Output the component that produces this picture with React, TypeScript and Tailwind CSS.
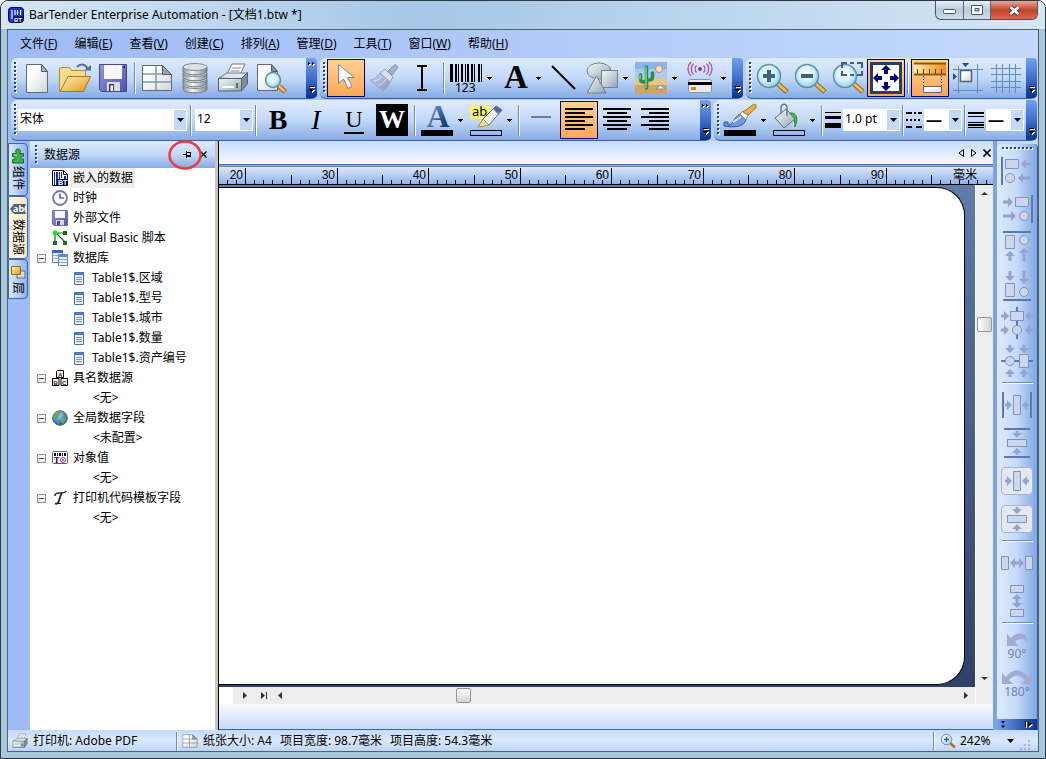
import type { ReactNode } from "react";

type Children = { children?: ReactNode };

const Icon = ({ children, w = 32, h = 32 }: Children & { w?: number; h?: number }) => (
  <svg width={w} height={h} viewBox={`0 0 ${w} ${h}`} fill="none" aria-hidden="true" className="shrink-0 overflow-visible">
    {children}
  </svg>
);

const Gradients = () => (
  <svg width="0" height="0" className="h-0 w-0" aria-hidden="true">
    <defs>
      <linearGradient id="paper" x1="0" y1="0" x2="1" y2="1">
        <stop offset="0.3" stopColor="#ffffff" />
        <stop offset="1" stopColor="#cdd3dc" />
      </linearGradient>
      <linearGradient id="gold" x1="0" y1="0" x2="1" y2="1">
        <stop offset="0" stopColor="#fff0b8" />
        <stop offset="1" stopColor="#dd9a1c" />
      </linearGradient>
      <linearGradient id="steel" x1="0" y1="0" x2="1" y2="0">
        <stop offset="0" stopColor="#8d979c" />
        <stop offset="0.4" stopColor="#f4f7f8" />
        <stop offset="1" stopColor="#7b868c" />
      </linearGradient>
      <linearGradient id="violet" x1="0" y1="0" x2="1" y2="1">
        <stop offset="0" stopColor="#9498dc" />
        <stop offset="1" stopColor="#5252a4" />
      </linearGradient>
      <linearGradient id="shape" x1="0" y1="0" x2="1" y2="1">
        <stop offset="0" stopColor="#f6fbfc" />
        <stop offset="1" stopColor="#93a6b3" />
      </linearGradient>
      <linearGradient id="navy" x1="0" y1="0" x2="1" y2="1">
        <stop offset="0.1" stopColor="#8fb2e2" />
        <stop offset="0.7" stopColor="#1f3f7a" />
      </linearGradient>
      <linearGradient id="muted" x1="0" y1="0" x2="1" y2="1">
        <stop offset="0" stopColor="#cbd3e8" />
        <stop offset="1" stopColor="#8795bd" />
      </linearGradient>
      <linearGradient id="amber" x1="0" y1="0" x2="1" y2="0">
        <stop offset="0" stopColor="#fff0b0" />
        <stop offset="1" stopColor="#f08a1c" />
      </linearGradient>
      <radialGradient id="lens" cx="0.45" cy="0.4" r="0.6">
        <stop offset="0" stopColor="#ffffff" />
        <stop offset="0.55" stopColor="#d4f1fb" />
        <stop offset="1" stopColor="#8fcbea" />
      </radialGradient>
      <radialGradient id="globe" cx="0.4" cy="0.3" r="0.7">
        <stop offset="0" stopColor="#a8d8ff" />
        <stop offset="1" stopColor="#1b4f9c" />
      </radialGradient>
    </defs>
  </svg>
);

const Caret = () => (
  <svg width="5" height="3" viewBox="0 0 5 3" aria-hidden="true" shapeRendering="crispEdges">
    <path d="M0 0h5v1h-1v1h-1v1h-1v-1h-1v-1h-1z" fill="#000" />
  </svg>
);

const Grip = () => (
  <svg width="7" height="32" viewBox="0 0 7 32" aria-hidden="true" className="shrink-0" shapeRendering="crispEdges">
    {[0, 1, 2, 3, 4, 5, 6, 7].map((i) => (
      <g key={i}>
        <rect x="4" y={i * 4 + 1} width="2" height="2" fill="#fff" />
        <rect x="3" y={i * 4} width="2" height="2" fill="#27418a" />
      </g>
    ))}
  </svg>
);

const Separator = ({ className = "h-[31px]" }: { className?: string }) => (
  <div className={`flex w-[6px] shrink-0 justify-center ${className}`} role="separator">
    <div className="w-px bg-[#6a8ccb]" />
    <div className="w-px bg-white" />
  </div>
);

const Overflow = ({ arrows = false }: { arrows?: boolean }) => (
  <button
    aria-label="工具栏选项"
    className="ml-auto flex h-full w-[11px] shrink-0 flex-col items-center justify-between rounded-r-sm bg-linear-to-b from-[#74a0ef] via-[#3f6fc9] to-[#07338f] py-1"
  >
    <svg width="8" height="5" viewBox="0 0 8 5" aria-hidden="true" shapeRendering="crispEdges">
      {arrows && (
        <>
          <path d="M1 1h1v1h1v1h-1v1h-1zM5 1h1v1h1v1h-1v1h-1z" fill="#fff" />
          <path d="M0 0h1v1h1v1h-1v1h-1zM4 0h1v1h1v1h-1v1h-1z" fill="#000" />
        </>
      )}
    </svg>
    <svg width="8" height="8" viewBox="0 0 8 8" aria-hidden="true" shapeRendering="crispEdges">
      <path d="M2 1h5v1H2zM2 4h5v1h-1v1h-1v1h-1v-1h-1v-1h-1z" fill="#fff" />
      <path d="M1 0h5v1H1zM1 3h5v1h-1v1h-1v1h-1v-1h-1v-1h-1z" fill="#000" />
    </svg>
  </button>
);

const Toolbar = ({ children, label, className, arrows }: Children & { label: string; className: string; arrows?: boolean }) => (
  <div
    role="toolbar"
    aria-label={label}
    className={`flex h-[41px] items-center rounded-md border-b border-[#3b619c] bg-linear-to-b from-[#dfebfd] via-[#c3d9f8] to-[#86abe4] ${className}`}
  >
    <Grip />
    {children}
    <Overflow arrows={arrows} />
  </div>
);

const ToolButton = ({ children, label, active, menu }: Children & { label: string; active?: boolean; menu?: boolean }) => (
  <button
    aria-label={label}
    aria-pressed={active}
    className={`flex h-[38px] shrink-0 items-center border ${menu ? "w-[49px] gap-[5px] pl-[2px]" : "w-[38px] justify-center"} ${
      active ? "border-[#000080] bg-linear-to-b from-[#ffd192] to-[#fda754]" : "border-transparent"
    }`}
  >
    {children}
    {menu && <Caret />}
  </button>
);

const Combo = ({ label, value, className }: { label: string; value: string; className: string }) => (
  <div className={`relative h-[22px] shrink-0 bg-white ${className}`}>
    <select
      aria-label={label}
      defaultValue={value}
      className="block h-[22px] w-full appearance-none pb-[2px] pl-[2px] leading-5 text-black"
    >
      <option>{value}</option>
    </select>
    <span className="pointer-events-none absolute inset-y-px right-px flex w-3 items-center justify-center bg-[#c3d9f8]">
      <svg width="7" height="4" viewBox="0 0 7 4" aria-hidden="true">
        <path d="M0 0h7L3.500 4z" fill="#000" />
      </svg>
    </span>
  </div>
);

const Magnifier = ({ children }: Children) => (
  <Icon>
    <path d="M21 21l10 9" stroke="#8a6a1c" strokeWidth="5" />
    <path d="M21 21l9.500 8.500" stroke="#eebd5a" strokeWidth="3" />
    <circle cx="13" cy="14" r="11.500" fill="url(#lens)" stroke="#5f93a8" strokeWidth="1.500" />
    {children}
  </Icon>
);

const GridPage = () => (
  <>
    <path d="M1.500 3.500h20l9 9v16h-29z" fill="url(#paper)" stroke="#5b6b78" />
    <path d="M2 12h20M2 20h28M15 4v24" stroke="#8897a5" strokeWidth="1.500" />
    <path d="M21.500 3.500v9h9z" fill="#8fa3b4" stroke="#4d5f70" />
  </>
);

const PrinterShape = () => (
  <>
    <path d="M10 12L15 2h13l-5 11z" fill="#fff" stroke="#687885" />
    <path d="M15 6h9M13.500 9h9" stroke="#7a8894" />
    <path d="M2 16l8-5h20l-6 6z" fill="#dfe6eb" stroke="#6b7a86" />
    <path d="M1.500 16.500h23V29h-23z" fill="url(#shape)" stroke="#566572" />
    <path d="M24.500 16.500l6-6V22l-6 7z" fill="#7d8d99" stroke="#566572" />
    <path d="M5 25h12" stroke="#fff" strokeWidth="2" />
    <path d="M19 22h2v4h-2z" fill="#2a8f2e" />
    <path d="M19 21h2v1h-2z" fill="#d33" />
  </>
);

const FloppyShape = () => (
  <>
    <path d="M2.500 2.500h27v27h-25l-2-2z" fill="url(#violet)" stroke="#45458f" />
    <path d="M7 3h18v14H7z" fill="#f5f6ff" />
    <path d="M10 20h13v9H10z" fill="#d8dbe6" />
    <path d="M12 22h5v7h-5z" fill="#3c3c55" />
    <path d="M13.500 23.500h2.500v5.500h-2.500z" fill="#fff" />
    <path d="M26.500 4h1.500v2h-1.500z" fill="#1d1d55" />
  </>
);

const FileToolbar = () => (
  <Toolbar label="标准" className="w-[306px]" arrows>
    <ToolButton label="新建">
      <Icon>
        <path d="M5.500 2.500h15l6 7v21h-21z" fill="url(#paper)" stroke="#5b6b78" />
        <path d="M20.500 2.500v7h6z" fill="#9fb0bf" stroke="#4d5f70" />
      </Icon>
    </ToolButton>
    <ToolButton label="打开">
      <Icon>
        <path d="M.5 29V6.500l2-1h8l2 3h14V17" fill="#f8dc8c" stroke="#b98a2c" />
        <path d="M1 29.500L9 14.500h22.500l-7 15z" fill="url(#gold)" stroke="#a8741a" />
        <path d="M18 5c4-4 9-3 11 3" stroke="#4f7299" strokeWidth="2" />
        <path d="M25 8.500h7V3z" fill="#4f7299" />
      </Icon>
    </ToolButton>
    <ToolButton label="保存">
      <Icon>
        <FloppyShape />
      </Icon>
    </ToolButton>
    <Separator />
    <ToolButton label="页面设置">
      <Icon>
        <GridPage />
      </Icon>
    </ToolButton>
    <ToolButton label="数据库连接设置">
      <Icon>
        {[21, 15, 9, 3].map((y) => (
          <g key={y}>
            <path d={`M4 ${y + 2}v4c0 5 24 5 24 0v-4`} fill="url(#steel)" stroke="#707b80" />
            <ellipse cx="16" cy={y + 2} rx="12" ry="3.500" fill="#dce2e4" stroke="#7d888d" />
          </g>
        ))}
      </Icon>
    </ToolButton>
    <ToolButton label="打印">
      <Icon>
        <PrinterShape />
      </Icon>
    </ToolButton>
    <ToolButton label="打印预览">
      <Icon>
        <path d="M2.500 2.500h14l6 7v19h-20z" fill="url(#paper)" stroke="#5b6b78" />
        <path d="M16.500 2.500v7h6z" fill="#7f93a5" stroke="#4d5f70" />
        <path d="M24 24l6 6" stroke="#8a6a1c" strokeWidth="5" />
        <path d="M24 24l5.500 5.500" stroke="#eebd5a" strokeWidth="3" />
        <circle cx="18" cy="18" r="7.500" fill="url(#lens)" stroke="#5f93a8" strokeWidth="1.500" />
      </Icon>
    </ToolButton>
  </Toolbar>
);

const bars = [0, 5, 8, 11, 15, 17, 21, 24, 28, 31];
const barWidths = [3, 2, 1, 2, 1, 2, 2, 1, 2, 1];

const ObjectToolbar = () => (
  <Toolbar label="对象" className="w-[423px]">
    <ToolButton label="选择" active>
      <Icon>
        <path d="M8.500 2.500v19l5-4.500 4.500 9.500 4-2-4.500-9h7z" fill="#fff" stroke="#7b8292" />
        <path d="M10 5v13M18 25l3-1.500-5-9" stroke="#d5dcea" />
      </Icon>
    </ToolButton>
    <ToolButton label="格式刷">
      <Icon>
        <path d="M20 9l7-6.500 3 2.500-6 8z" fill="#a5b2ce" stroke="#8592b4" />
        <path d="M12 11l5-4 8 8-3 5z" fill="#d9e0ef" stroke="#929fbf" />
        <path d="M12 11l10 9c-1 4-4 7-7 9L2 18c4 0 7-3 10-7z" fill="url(#muted)" stroke="#99a7c6" />
        <path d="M6 19c3 0 6-2 8-5M10 24c4-2 6-4 8-7" stroke="#dfe6f4" />
      </Icon>
    </ToolButton>
    <ToolButton label="文本光标">
      <Icon>
        <path d="M11 4h4l1 1 1-1h4M16 5v22M11 28h4l1-1 1 1h4" stroke="#000" strokeWidth="2" shapeRendering="crispEdges" />
      </Icon>
    </ToolButton>
    <Separator />
    <ToolButton label="创建条形码" menu>
      <Icon>
        {bars.map((x, i) => (
          <rect key={x} x={x} y="2" width={barWidths[i]} height="18" fill="#000" />
        ))}
        <text x="5" y="30" fontSize="12" fill="#000" fontFamily="Noto Sans, sans-serif">123</text>
      </Icon>
    </ToolButton>
    <ToolButton label="创建文本" menu>
      <Icon>
        <text x="17" y="26" textAnchor="middle" fontSize="33" fontWeight="700" fill="#000" fontFamily="Liberation Serif, serif">A</text>
      </Icon>
    </ToolButton>
    <ToolButton label="线条">
      <Icon>
        <path d="M4 4l23 23" stroke="#000" strokeWidth="2" />
      </Icon>
    </ToolButton>
    <ToolButton label="形状" menu>
      <Icon>
        <ellipse cx="13" cy="9" rx="12" ry="8" fill="url(#shape)" stroke="#71808c" />
        <path d="M15.500 8.500h16v17h-16z" fill="url(#shape)" stroke="#71808c" />
        <path d="M10.500 14l9.500 17H1z" fill="url(#shape)" stroke="#71808c" />
      </Icon>
    </ToolButton>
    <ToolButton label="图片" menu>
      <Icon>
        <path d="M0 0h32v32H0z" fill="#a9c8f8" />
        <path d="M0 0h32v7H0z" fill="#74a6f0" opacity=".6" />
        <path d="M0 16h32v16H0z" fill="#e3c68b" />
        <path d="M0 23h32v9H0z" fill="#cba763" />
        <circle cx="24" cy="7" r="3.500" fill="#fbe3c4" stroke="#ee7c45" />
        <path d="M11.500 26V5M5.500 13v4c0 3 2 3 5 3M17.500 11v4c0 3-2 3-5 3" stroke="#2e8b45" strokeWidth="3.500" strokeLinecap="round" />
        <path d="M11 26V5M5 13v4" stroke="#73d57e" strokeWidth="1.500" />
        <path d="M21 27l4-4 6 4z" fill="#e3e5f5" stroke="#8b8ba8" />
      </Icon>
    </ToolButton>
    <ToolButton label="编码器" menu>
      <Icon>
        <circle cx="16" cy="7" r="2" fill="#9a2f94" />
        <path
          d="M12.500 3.500c-2 2-2 5 0 7M19.500 3.500c2 2 2 5 0 7M9.500 1.500c-3 3-3 8 0 11M22.500 1.500c3 3 3 8 0 11M7 0c-4 4-4 10 0 14M25 0c4 4 4 10 0 14"
          stroke="#a94fa5"
          strokeWidth="1.300"
        />
        <rect x="4.500" y="17.500" width="23" height="13" rx="2" fill="#e6eaec" stroke="#8b979e" />
        <path d="M4 20h24v3H4z" fill="#000" />
        <path d="M7 25h5v3H7z" fill="#c58c2d" />
      </Icon>
    </ToolButton>
  </Toolbar>
);

const ViewToolbar = () => (
  <Toolbar label="视图" className="flex-1">
    <ToolButton label="放大">
      <Magnifier>
        <path d="M13 8v12M7 14h12" stroke="#3f6186" strokeWidth="4" />
      </Magnifier>
    </ToolButton>
    <ToolButton label="缩小">
      <Magnifier>
        <path d="M7 14h12" stroke="#3f6186" strokeWidth="4" />
      </Magnifier>
    </ToolButton>
    <ToolButton label="缩放到选定区域">
      <Magnifier>
        <path d="M10 6V1h5M25 1h5v5M30 9v4h-5M15 13h-5V9M18 1h4M18 13h4" stroke="#3f6186" strokeWidth="2" />
      </Magnifier>
    </ToolButton>
    <ToolButton label="适合窗口" active>
      <Icon>
        <path d="M1.500 1.500h29v29h-29z" fill="#fff" stroke="#2a3d5e" strokeWidth="3" />
        <path d="M16 3l5 5h-3v4h-4V8h-3zM16 29l5-5h-3v-4h-4v4h-3zM3 16l5-5v3h4v4H8v3zM29 16l-5-5v3h-4v4h4v3z" fill="#00007c" />
      </Icon>
    </ToolButton>
    <Separator />
    <ToolButton label="标尺" active>
      <Icon>
        <path d="M0 1h32v12H0z" fill="url(#amber)" />
        <path d="M0 1.500h32M0 12.500h32" stroke="#8a5a08" strokeWidth="2" />
        <path d="M3.500 7v5M9.500 7v5M15.500 7v5M21.500 7v5M27.500 7v5" stroke="#5c3c04" />
        <path d="M9.500 14v10M27.500 14v10" stroke="#383838" strokeDasharray="1 2" />
        <path d="M9.500 24.500h18v6h-18z" fill="url(#paper)" stroke="#5b6b78" />
      </Icon>
    </ToolButton>
    <ToolButton label="对齐网格">
      <Icon>
        <path d="M1 7.500h30M1 28.500h30M6.500 4v27M25.500 2v29" stroke="#5f8ec2" />
        <path d="M8.500 8.500h11v11h-11z" fill="url(#paper)" stroke="#54647a" strokeWidth="1.500" />
        <path d="M10 1h7l-3.500 4zM1 11v7l4-3.500z" fill="#1d4aa0" />
      </Icon>
    </ToolButton>
    <ToolButton label="网格">
      <Icon>
        <path d="M1 6.500h30M1 12.500h30M1 19.500h30M1 25.500h30M6.500 2v29M12.500 2v29M19.500 2v29M25.500 2v29" stroke="#5f8ec2" />
      </Icon>
    </ToolButton>
  </Toolbar>
);

const TextToolbar = () => (
  <Toolbar label="文本格式" className="w-[700px]" arrows>
    <Combo label="字体" value="宋体" className="mr-px w-[169px] text-xs" />
    <Separator />
    <Combo label="字号" value="12" className="ml-px w-[58px] text-xs" />
    <Separator />
    <div className="mr-px flex font-['Liberation_Serif',serif] text-[28px] leading-8 text-black">
      <ToolButton label="加粗"><b>B</b></ToolButton>
      <ToolButton label="倾斜"><i>I</i></ToolButton>
      <ToolButton label="下划线">
        <span className="border-b-2 border-black px-px text-[24px] leading-[26px]">U</span>
      </ToolButton>
      <ToolButton label="反白">
        <b className="flex size-8 items-center justify-center bg-black text-[26px] text-white">W</b>
      </ToolButton>
    </div>
    <Separator />
    <ToolButton label="字体颜色" menu>
      <Icon>
        <text x="17" y="23" textAnchor="middle" fontSize="32" fontWeight="700" fill="url(#navy)" fontFamily="Liberation Serif, serif">A</text>
        <path d="M0 26h32v6H0z" fill="#000" />
      </Icon>
    </ToolButton>
    <ToolButton label="填充颜色" menu>
      <Icon>
        <path d="M0 1h20v14H0z" fill="#f5f56c" />
        <text x="2" y="12" fontSize="13" fill="#000" fontFamily="Noto Sans, sans-serif">ab</text>
        <path d="M13 15L26 2l6 4-13 15z" fill="url(#paper)" stroke="#5c6684" />
        <path d="M26 2l6 4-4 4-5-5z" fill="#57689c" />
        <path d="M13 15l6 6-4 1-7 1z" fill="#f7e08a" stroke="#a98e3a" />
        <path d="M.5 26.500h31v5H.5z" stroke="#000" />
      </Icon>
    </ToolButton>
    <Separator />
    <ToolButton label="线">
      <Icon>
        <path d="M6 13h20" stroke="#637db0" strokeWidth="2" />
      </Icon>
    </ToolButton>
    <ToolButton label="左对齐" active>
      <Icon>
        <path d="M2 5h28M2 13h28M2 21h28M2 9h20M2 17h20M2 25h20" stroke="#000" strokeWidth="2" />
      </Icon>
    </ToolButton>
    <ToolButton label="居中">
      <Icon>
        <path d="M2 5h28M2 13h28M2 21h28M6 9h20M6 17h20M6 25h20" stroke="#000" strokeWidth="2" />
      </Icon>
    </ToolButton>
    <ToolButton label="右对齐">
      <Icon>
        <path d="M2 5h28M2 13h28M2 21h28M10 9h20M10 17h20M10 25h20" stroke="#000" strokeWidth="2" />
      </Icon>
    </ToolButton>
  </Toolbar>
);

const LineToolbar = () => (
  <Toolbar label="线条格式" className="flex-1">
    <ToolButton label="线条颜色" menu>
      <Icon>
        <path d="M0 18h4v3c6 0 4-6 12-11l6 5c-1 8-12 9-22 7z" fill="#6f95e4" stroke="#2f56b4" />
        <path d="M9 18c3-1 5-4 8-5" stroke="#dbe7ff" strokeWidth="2" />
        <path d="M16 10l3-3 5 4-2 5z" fill="#f2f2f2" stroke="#8b8b9a" />
        <path d="M19 8L30 0l2 1v3l-8 7z" fill="#e5b24c" stroke="#a87a20" />
        <path d="M0 26h32v6H0z" fill="#000" />
      </Icon>
    </ToolButton>
    <ToolButton label="填充" menu>
      <Icon>
        <path d="M17 9c6-1 9 5 5 14 0-6-1-10-6-11z" fill="#43b649" stroke="#2b8a34" />
        <path d="M2 14l11-9 9 10-11 9z" fill="url(#shape)" stroke="#5c6b78" />
        <path d="M8 9V4c0-5 6-5 6 0v8" stroke="#6c7b88" strokeWidth="1.500" />
        <path d="M.5 26.500h31v5H.5z" stroke="#000" />
      </Icon>
    </ToolButton>
    <Separator />
    <Icon w={18} h={18}>
      <path d="M0 1h16v1H0zM0 5h16v3H0zM0 12h16v5H0z" fill="#000" />
    </Icon>
    <Combo label="线条粗细" value="1.0 pt" className="w-[57px] text-xs" />
    <Separator />
    <Icon w={18} h={18}>
      <path d="M0 2h16" stroke="#000" strokeWidth="2" strokeDasharray="6 2 2 2" />
      <path d="M0 9h16" stroke="#000" strokeWidth="2" strokeDasharray="2 2" />
      <path d="M0 16h16" stroke="#000" strokeWidth="2" strokeDasharray="6 4" />
    </Icon>
    <Combo label="虚线样式" value="—" className="w-[38px] text-base font-bold" />
    <Separator />
    <Icon w={18} h={18}>
      <path d="M0 1h16v2H0zM0 5h16v1H0zM0 11h16v1H0zM0 13h16v2H0zM0 16h16v1H0z" fill="#000" />
    </Icon>
    <Combo label="复合线样式" value="—" className="w-[38px] text-base font-bold" />
  </Toolbar>
);

const menus = [
  ["文件", "F"],
  ["编辑", "E"],
  ["查看", "V"],
  ["创建", "C"],
  ["排列", "A"],
  ["管理", "D"],
  ["工具", "T"],
  ["窗口", "W"],
  ["帮助", "H"],
];

const MenuBar = () => (
  <nav className="flex h-7 items-center gap-px pl-1 text-xs text-black">
    {menus.map(([name, key]) => (
      <button key={key} className="px-2 whitespace-nowrap">
        {name}(<u>{key}</u>)
      </button>
    ))}
  </nav>
);

const BarTenderMark = () => (
  <svg width="16" height="16" viewBox="0 0 16 16" aria-hidden="true" className="shrink-0">
    <rect x=".5" y=".5" width="15" height="15" rx="3" fill="#1b34d6" stroke="#000a50" />
    <path d="M4 3v9M7 3v5M9.500 3v5M12.500 3v5" stroke="#fff" strokeWidth="1.200" />
    <path d="M5.500 9.500h9.500v5.500h-9.500z" fill="#000a50" />
    <text x="6" y="14.500" fontSize="6" fontWeight="700" fill="#fff" fontFamily="Liberation Sans, sans-serif">BT</text>
  </svg>
);

const TitleBar = () => (
  <header className="flex h-7 shrink-0 items-start bg-linear-to-r from-[#d6e6f5] via-[#a6c7e8] via-40% to-[#d5e6f3]">
    <div className="flex items-center gap-[5px] pt-[5px] pl-px">
      <BarTenderMark />
      <h1 className="text-xs leading-[18px] whitespace-nowrap text-black">BarTender Enterprise Automation - [文档1.btw *]</h1>
    </div>
    <div className="mr-px ml-auto flex h-[19px] overflow-hidden rounded-b-md border border-t-0 border-[#4a5563] bg-linear-to-b from-[#e8f0f8] via-[#b7c9dc] to-[#cfdeec]">
      <button aria-label="最小化" className="flex w-[28px] items-center justify-center border-r border-[#5b6775]">
        <svg width="13" height="6" viewBox="0 0 13 6" aria-hidden="true" className="mt-1">
          <rect x=".5" y=".5" width="12" height="4" rx="1" fill="#fff" stroke="#4b5562" />
        </svg>
      </button>
      <button aria-label="最大化" className="flex w-[27px] items-center justify-center border-r border-[#5b6775]">
        <svg width="12" height="10" viewBox="0 0 12 10" aria-hidden="true">
          <path d="M.5.5h11v9H.5zM4 3.500h4v2.500H4z" fill="#fff" stroke="#4b5562" fillRule="evenodd" />
        </svg>
      </button>
      <button aria-label="关闭" className="flex w-[46px] items-center justify-center bg-linear-to-b from-[#e8a99b] via-[#c2412b] to-[#d9694b]">
        <svg width="13" height="11" viewBox="0 0 13 11" aria-hidden="true">
          <path d="M2.500 2l8 7M10.500 2l-8 7" stroke="#4b3540" strokeWidth="4.500" />
          <path d="M2.500 2l8 7M10.500 2l-8 7" stroke="#fff" strokeWidth="2.800" />
        </svg>
      </button>
    </div>
  </header>
);

const sideTabs = [
  {
    name: "组件",
    height: "h-[53px]",
    icon: (
      <>
        <path d="M2.500 5.500h4c-2-3 0-5 2-4.500s3 2 1 4.500h4v3c-3-1-3 3 0 2.500v4h-11v-3.500c3.500 1 3.500-4 0-2.500z" fill="#3fae49" stroke="#176b25" />
        <path d="M4 7h3" stroke="#b8efbd" />
      </>
    ),
  },
  {
    name: "数据源",
    height: "h-[63px]",
    icon: (
      <>
        <path d="M0 8l4-5h12l-2 5 2 5H4z" fill="#51607c" />
        <text x="3" y="11" fontSize="9" fontWeight="700" fill="#fff" fontFamily="Noto Sans, sans-serif">ab</text>
      </>
    ),
  },
  {
    name: "层",
    height: "h-[40px]",
    icon: (
      <>
        <path d="M7 7h8v7H7z" fill="#d5d9e0" stroke="#6b7487" />
        <path d="M1.500 2.500h9v8h-9z" fill="url(#gold)" stroke="#9c6a14" />
      </>
    ),
  },
];

const SideTabs = () => (
  <div role="tablist" aria-orientation="vertical" className="flex w-[22px] shrink-0 flex-col bg-[#9ebbf5] pt-[2px]">
    {sideTabs.map((tab, i) => (
      <button
        key={tab.name}
        role="tab"
        aria-selected={i === 1}
        className={`flex w-5 flex-col items-center gap-[2px] rounded-r-sm border border-[#3b66b5] pt-1 text-xs text-black ${tab.height} ${
          i === 1 ? "bg-linear-to-r from-[#fffaf0] to-[#fbe6bf]" : "bg-linear-to-r from-[#dbe8fc] to-[#8fb2ea]"
        }`}
      >
        <Icon w={16} h={16}>{tab.icon}</Icon>
        <span className="leading-[14px] [text-orientation:sideways] [writing-mode:vertical-rl]">{tab.name}</span>
      </button>
    ))}
  </div>
);

const icons: Record<string, ReactNode> = {
  embed: (
    <>
      <path d="M.5.5h11l4 4v11H.5z" fill="#fff" stroke="#000a50" />
      <path d="M11.500.5v4h4" stroke="#000a50" />
      <path d="M2 2h1v13H2zM4 2h2v13H4zM7 2h1v7H7zM9 2h1v6H9zM12 6h2v3h-2z" fill="#1226c8" />
      <path d="M5 9h11v7H5z" fill="#000a50" />
      <text x="6" y="15" fontSize="7" fontWeight="700" fill="#fff" fontFamily="Liberation Sans, sans-serif">BT</text>
    </>
  ),
  clock: (
    <>
      <circle cx="8" cy="8" r="7" fill="#f4f7ff" stroke="#7477b5" strokeWidth="1.800" />
      <path d="M8 3.500V8h4" stroke="#33336e" strokeWidth="1.200" />
    </>
  ),
  file: (
    <>
      <path d="M.5.5h15v15H2l-1.500-1.500z" fill="url(#violet)" stroke="#6a6cb8" />
      <path d="M3 1h10v7H3z" fill="#f5f6ff" />
      <path d="M4 10h8v5H4z" fill="#d8dbe6" />
      <path d="M5 11h3v4H5z" fill="#4c4c70" />
    </>
  ),
  script: (
    <>
      <path d="M3 3v10M3 3h10M4 3l9 9" stroke="#156c15" strokeWidth="1.200" />
      <circle cx="3" cy="3" r="2.500" fill="#1fe01f" />
      <path d="M11 1h4v4h-4zM1 11h4v4H1zM11 11h4v4h-4z" fill="#137413" />
    </>
  ),
  database: (
    <>
      <path d="M.5.5h10v12H.5z" fill="#eaf1fb" stroke="#6a86b8" />
      <path d="M0 0h11v3H0z" fill="#3568bd" />
      <path d="M1 5.500h9M1 8.500h9" stroke="#9fb4d8" />
      <path d="M6.500 4.500h9v11h-9z" fill="#eaf1fb" stroke="#6a86b8" />
      <path d="M6 4h10v3H6z" fill="#5d8ad4" />
      <path d="M7 9.500h8M7 12.500h8" stroke="#8da5cf" />
    </>
  ),
  blocks: (
    <>
      <path d="M4.500 1.500l1-1h6v7h-7zM.5 8.500h6.500v7H.5zM9 8.500h6.500v7H9z" fill="#fbf7b8" stroke="#000" />
      <g fontSize="6" fontWeight="700" fill="#1818c8" fontFamily="Liberation Sans, sans-serif">
        <text x="6" y="6.500">A</text>
        <text x="1.500" y="14.500">B</text>
        <text x="10" y="14.500">C</text>
      </g>
    </>
  ),
  globe: (
    <>
      <circle cx="8" cy="8" r="7.300" fill="url(#globe)" stroke="#55677c" />
      <path d="M2 4c2-3 6-3 7-2l-2 4-3 3-2-1zM9 9l4-2 1 3-3 4-2-2zM4 11l3 1v2z" fill="#5cb04f" />
    </>
  ),
  values: (
    <>
      <rect x=".5" y="1.500" width="15" height="12" rx="1" fill="#fff" stroke="#5b6478" />
      <path d="M2 3h2v3H2zM5 3h1v3H5zM7 3h2v3H7zM10 3h1v3h-1zM12 3h2v3h-2z" fill="#000" />
      <text x="2" y="12.500" fontSize="8" fontWeight="700" fill="#000" fontFamily="Liberation Serif, serif">T</text>
      <circle cx="11" cy="10" r="2.500" stroke="#a32ba0" />
      <circle cx="11" cy="10" r="1" fill="#a32ba0" />
    </>
  ),
  template: (
    <>
      <path d="M3 6c0-3 2-3 5-3s5 0 6-2" stroke="#222" strokeWidth="1.500" />
      <path d="M9.500 3c-1 3-2 6-3 9-.5 1.500-2 2-3.500 1.500" stroke="#222" strokeWidth="1.800" />
      <path d="M5 13.500h4" stroke="#222" />
    </>
  ),
};

type TreeItem = { label: string; icon: string; children?: string[]; selected?: boolean };

const tree: TreeItem[] = [
  { label: "嵌入的数据", icon: "embed", selected: true },
  { label: "时钟", icon: "clock" },
  { label: "外部文件", icon: "file" },
  { label: "Visual Basic 脚本", icon: "script" },
  {
    label: "数据库",
    icon: "database",
    children: ["Table1$.区域", "Table1$.型号", "Table1$.城市", "Table1$.数量", "Table1$.资产编号"],
  },
  { label: "具名数据源", icon: "blocks", children: ["<无>"] },
  { label: "全局数据字段", icon: "globe", children: ["<未配置>"] },
  { label: "对象值", icon: "values", children: ["<无>"] },
  { label: "打印机代码模板字段", icon: "template", children: ["<无>"] },
];

const TreeNode = ({ item }: { item: TreeItem }) => (
  <li>
    <div className="flex h-5 items-center pl-[7px]">
      <span className="flex w-[15px] shrink-0">
        {item.children && (
          <button aria-label="折叠" className="flex size-[9px] items-center justify-center border border-[#919191] bg-[#f6f6f6]">
            <span className="h-px w-[5px] bg-[#2b4a9a]" />
          </button>
        )}
      </span>
      <Icon w={16} h={16}>{icons[item.icon]}</Icon>
      <span className={`ml-[3px] px-[2px] leading-5 whitespace-nowrap ${item.selected ? "bg-[#f0f0f0]" : ""}`}>{item.label}</span>
    </div>
    {item.children && (
      <ul>
        {item.children.map((child) => (
          <li key={child} className="flex h-5 items-center pl-[44px] whitespace-nowrap">
            {child.startsWith("<") ? (
              <span className="pl-[19px]">{child}</span>
            ) : (
              <>
                <Icon w={10} h={13}>
                  <path d="M.5.5h9v12h-9z" fill="#eef3fb" stroke="#4f6ea8" />
                  <path d="M0 0h10v3H0z" fill="#4a78c9" />
                  <path d="M2 5.500h6M2 7.500h6M2 9.500h6" stroke="#7791bf" />
                </Icon>
                <span className="ml-2">{child}</span>
              </>
            )}
          </li>
        ))}
      </ul>
    )}
  </li>
);

const DataSourcePanel = () => (
  <aside className="flex w-[189px] shrink-0 flex-col border-r border-black bg-white text-xs text-black">
    <div className="flex flex-1 flex-col border-r-[3px] border-[#c9c5bd]">
      <div className="flex h-[27px] items-center bg-linear-to-b from-[#dfebfd] via-[#c3d9f8] to-[#86abe4] pl-[3px]">
        <svg width="8" height="20" viewBox="0 0 8 20" aria-hidden="true" shapeRendering="crispEdges">
          {[0, 1, 2, 3, 4].map((i) => (
            <g key={i}>
              <rect x="3" y={i * 4 + 1} width="2" height="2" fill="#fff" />
              <rect x="2" y={i * 4} width="2" height="2" fill="#27418a" />
            </g>
          ))}
        </svg>
        <h2 className="ml-[3px]">数据源</h2>
        <div className="relative ml-auto">
          <button aria-label="自动隐藏" className="flex size-4 items-center justify-center">
            <svg width="9" height="7" viewBox="0 0 9 7" fill="none" aria-hidden="true" shapeRendering="crispEdges">
              <path d="M0 3h3v1H0zM3 0h1v7H3zM4 1h4v1H4zM4 4h4v2H4zM7 1h1v5H7z" fill="#000" />
            </svg>
          </button>
          <svg width="36" height="32" viewBox="0 0 36 32" fill="none" aria-hidden="true" className="pointer-events-none absolute -top-2 -left-3 z-10 max-w-none">
            <ellipse cx="18" cy="16" rx="15.500" ry="13.500" stroke="#f23a3a" strokeWidth="2.500" />
          </svg>
        </div>
        <button aria-label="关闭面板" className="mr-1 flex size-4 items-center justify-center">
          <svg width="7" height="7" viewBox="0 0 7 7" aria-hidden="true">
            <path d="M.5.5l6 6M6.500.5l-6 6" stroke="#000" strokeWidth="1.300" />
          </svg>
        </button>
      </div>
      <ul>
        {tree.map((item) => (
          <TreeNode key={item.label} item={item} />
        ))}
      </ul>
    </div>
  </aside>
);

// 10 mm on the ruler is 91.5 px at the current zoom
const MM = 9.15;
const ticks = Array.from({ length: 84 }, (_, i) => i - 2);

const Ruler = () => (
  <div className="flex h-[18px] shrink-0 overflow-hidden border-b border-black bg-linear-to-b from-[#dce9fd] to-[#8db2ea]">
    <svg height="17" className="w-full" aria-label="标尺" fontSize="12" fontFamily="Liberation Sans, Noto Sans CJK SC, sans-serif">
      {ticks.map((t) => {
        const x = Math.round(26 + t * MM);
        // the unit label takes the place of the last long tick
        const top = t >= 80 ? 13 : t % 10 === 0 ? 1 : t % 5 === 0 ? 8 : 13;
        return <rect key={t} x={x} y={top} width="1" height={17 - top} fill="#000" />;
      })}
      {[20, 30, 40, 50, 60, 70, 80, 90].map((n, i) => (
        <text key={n} x={Math.round(24 + i * 91.5)} y="12" textAnchor="end" fill="#000">
          {n}
        </text>
      ))}
      <text x="734" y="12" fill="#000">毫米</text>
    </svg>
  </div>
);

const ScrollArrow = ({ d, label }: { d: string; label: string }) => (
  <button aria-label={label} className="flex size-[17px] shrink-0 items-center justify-center">
    <svg width="7" height="7" viewBox="0 0 7 7" aria-hidden="true">
      <path d={d} fill="#333" />
    </svg>
  </button>
);

const Workspace = () => (
  <main className="flex min-w-0 flex-1 flex-col border-r-4 border-[#7ea3e3]">
    <div className="flex h-[23px] shrink-0 items-center justify-end bg-linear-to-b from-[#c6dafa] to-[#f6faff]">
      <button aria-label="上一个" className="flex w-3 justify-center">
        <svg width="6" height="8" viewBox="0 0 6 8" fill="none" aria-hidden="true">
          <path d="M5.500.5v7L1 4z" stroke="#000" />
        </svg>
      </button>
      <button aria-label="下一个" className="flex w-[14px] justify-center">
        <svg width="6" height="8" viewBox="0 0 6 8" fill="none" aria-hidden="true">
          <path d="M.5.5v7L5 4z" stroke="#000" />
        </svg>
      </button>
      <button aria-label="关闭文档" className="flex w-3 justify-center">
        <svg width="8" height="8" viewBox="0 0 8 8" aria-hidden="true">
          <path d="M.5.5l7 7M7.500.5l-7 7" stroke="#000" strokeWidth="1.600" />
        </svg>
      </button>
    </div>
    <div className="h-[3px] shrink-0 border-t border-b border-t-[#3b66b5] border-b-[#808080] bg-[#8fb0e8]" />
    <Ruler />
    <div className="flex min-h-0 flex-1">
      <div className="flex min-w-0 flex-1 flex-col">
        <div className="flex flex-1 bg-linear-to-b from-[#5f7cab] to-[#2f4169] pt-[2px] pr-[10px] pb-[2px]">
          <div className="flex-1 rounded-r-[28px] border border-l-0 border-black bg-white" />
        </div>
        <div className="flex h-[17px] shrink-0 items-center bg-[#ededed]">
          <div className="h-full w-[14px] shrink-0 bg-white" />
          <div className="flex gap-[2px] pl-1">
            <ScrollArrow label="下一页" d="M1 0l4 3.500L1 7z" />
            <ScrollArrow label="最后一页" d="M0 0l4 3.500L0 7zM5 0h1v7H5z" />
          </div>
          <ScrollArrow label="向左滚动" d="M4 0L0 3.500 4 7z" />
          <div className="grow-[167]" />
          <div className="h-[15px] w-[15px] rounded-xs border border-[#979797] bg-linear-to-b from-white to-[#d3d3d3]" />
          <div className="grow-[490]" />
          <ScrollArrow label="向右滚动" d="M1 0l4 3.500L1 7z" />
        </div>
      </div>
      <div className="flex w-[18px] shrink-0 flex-col items-center border-l border-white bg-[#ededed] pb-[17px]">
        <ScrollArrow label="向上滚动" d="M0 5L3.500 2 7 5z" />
        <div className="grow-[115]" />
        <div className="h-[15px] w-[15px] rounded-xs border border-[#979797] bg-linear-to-r from-white to-[#d3d3d3]" />
        <div className="grow-[339]" />
        <ScrollArrow label="向下滚动" d="M0 2l3.500 3L7 2z" />
      </div>
    </div>
    <div className="h-[26px] shrink-0 border-b border-[#3b66b5] bg-linear-to-b from-[#f8fbff] to-[#c6dafa]" />
  </main>
);

// arrow heads used by the alignment icons, drawn around their tip
const Arrow = ({ x, y, dir, len = 9 }: { x: number; y: number; dir: 0 | 90 | 180 | 270; len?: number }) => (
  <path transform={`translate(${x} ${y}) rotate(${dir})`} d={`M0 0l-5-5v3.500H${-len}v3H-5V5z`} fill="#95a4cc" />
);

const shapeProps = { fill: "#cdd7eb", stroke: "#7f92c0" };
const lineProps = { stroke: "#5b79b4", strokeWidth: 2 };

const arrangeGroups: { label: string; boxed?: boolean; icon: ReactNode }[][] = [
  [
    {
      label: "左对齐",
      icon: (
        <>
          <path d="M1 2v28" {...lineProps} />
          <path d="M4.500 4.500h13v9h-13z" {...shapeProps} />
          <circle cx="9" cy="23" r="4.500" {...shapeProps} />
          <Arrow x={20} y={9} dir={180} len={10} />
          <Arrow x={17} y={23} dir={180} len={13} />
        </>
      ),
    },
    {
      label: "右对齐",
      icon: (
        <>
          <path d="M31 2v28" {...lineProps} />
          <path d="M14.500 4.500h13v9h-13z" {...shapeProps} />
          <circle cx="23" cy="23" r="4.500" {...shapeProps} />
          <Arrow x={12} y={9} dir={0} len={10} />
          <Arrow x={15} y={23} dir={0} len={13} />
        </>
      ),
    },
    {
      label: "顶端对齐",
      icon: (
        <>
          <path d="M2 1h28" {...lineProps} />
          <path d="M4.500 4.500h9v13h-9z" {...shapeProps} />
          <circle cx="23" cy="9" r="4.500" {...shapeProps} />
          <Arrow x={9} y={20} dir={270} len={10} />
          <Arrow x={23} y={17} dir={270} len={13} />
        </>
      ),
    },
    {
      label: "底端对齐",
      icon: (
        <>
          <path d="M2 31h28" {...lineProps} />
          <path d="M4.500 14.500h9v13h-9z" {...shapeProps} />
          <circle cx="23" cy="23" r="4.500" {...shapeProps} />
          <Arrow x={9} y={12} dir={90} len={10} />
          <Arrow x={23} y={15} dir={90} len={13} />
        </>
      ),
    },
    {
      label: "水平居中",
      icon: (
        <>
          <path d="M16 0v32" {...lineProps} />
          <path d="M9.500 4.500h13v9h-13z" {...shapeProps} />
          <circle cx="16" cy="23" r="4.500" {...shapeProps} />
          <Arrow x={8} y={9} dir={0} len={8} />
          <Arrow x={24} y={9} dir={180} len={8} />
          <Arrow x={8} y={23} dir={0} len={8} />
          <Arrow x={24} y={23} dir={180} len={8} />
        </>
      ),
    },
    {
      label: "垂直居中",
      icon: (
        <>
          <path d="M0 16h32" {...lineProps} />
          <path d="M18.500 9.500h9v13h-9z" {...shapeProps} />
          <circle cx="9" cy="16" r="4.500" {...shapeProps} />
          <Arrow x={9} y={8} dir={90} len={8} />
          <Arrow x={23} y={8} dir={90} len={8} />
          <Arrow x={9} y={24} dir={270} len={8} />
          <Arrow x={23} y={24} dir={270} len={8} />
        </>
      ),
    },
  ],
  [
    {
      label: "水平居中于参照",
      icon: (
        <>
          <path d="M2 3v26M30 3v26" {...lineProps} />
          <path d="M12.500 6.500h7v19h-7z" {...shapeProps} />
          <Arrow x={11} y={16} dir={0} len={7} />
          <Arrow x={21} y={16} dir={180} len={7} />
        </>
      ),
    },
    {
      label: "垂直居中于参照",
      icon: (
        <>
          <path d="M3 2h26M3 30h26" {...lineProps} />
          <path d="M6.500 12.500h19v7h-19z" {...shapeProps} />
          <Arrow x={16} y={11} dir={90} len={7} />
          <Arrow x={16} y={21} dir={270} len={7} />
        </>
      ),
    },
    {
      label: "页面水平居中",
      boxed: true,
      icon: (
        <>
          <path d="M12.500 6.500h7v19h-7z" {...shapeProps} />
          <Arrow x={11} y={16} dir={0} len={7} />
          <Arrow x={21} y={16} dir={180} len={7} />
        </>
      ),
    },
    {
      label: "页面垂直居中",
      boxed: true,
      icon: (
        <>
          <path d="M6.500 12.500h19v7h-19z" {...shapeProps} />
          <Arrow x={16} y={11} dir={90} len={7} />
          <Arrow x={16} y={21} dir={270} len={7} />
        </>
      ),
    },
  ],
  [
    {
      label: "横向分布",
      icon: (
        <>
          <path d="M.5 9.500h7v13h-7zM24.500 9.500h7v13h-7z" {...shapeProps} />
          <Arrow x={9} y={16} dir={180} len={7} />
          <Arrow x={23} y={16} dir={0} len={7} />
        </>
      ),
    },
    {
      label: "纵向分布",
      icon: (
        <>
          <path d="M9.500.5h13v7h-13zM9.500 24.500h13v7h-13z" {...shapeProps} />
          <Arrow x={16} y={9} dir={270} len={7} />
          <Arrow x={16} y={23} dir={90} len={7} />
        </>
      ),
    },
  ],
  [
    {
      label: "旋转90度",
      icon: (
        <>
          <path d="M6 5v12h12l-4-4c4-4 9-4 12 0 2-8-8-13-16-4z" fill="#a1add0" />
          <text x="16" y="29" textAnchor="middle" fontSize="12" fill="#6f81b2" fontFamily="Noto Sans, sans-serif">90°</text>
        </>
      ),
    },
    {
      label: "旋转180度",
      icon: (
        <>
          <path d="M1 6v11h11l-4-4c5-6 11-6 16 0l-4 4h11V6l-4 4C20 1 12 1 5 10z" fill="#a1add0" />
          <text x="16" y="29" textAnchor="middle" fontSize="12" fill="#6f81b2" fontFamily="Noto Sans, sans-serif">180°</text>
        </>
      ),
    },
  ],
];

const ArrangeToolbar = () => (
  <div
    role="toolbar"
    aria-label="排列"
    aria-orientation="vertical"
    className="mt-[3px] flex w-[41px] shrink-0 flex-col rounded-t-sm border-r border-[#3b619c] bg-linear-to-r from-[#dfebfd] via-[#c6daf8] to-[#7fa6e3]"
  >
    <svg width="40" height="8" viewBox="0 0 40 8" aria-hidden="true" shapeRendering="crispEdges">
      {[0, 1, 2, 3, 4, 5, 6, 7].map((i) => (
        <g key={i}>
          <rect x={i * 4 + 6} y="4" width="2" height="2" fill="#fff" />
          <rect x={i * 4 + 5} y="3" width="2" height="2" fill="#27418a" />
        </g>
      ))}
    </svg>
    {arrangeGroups.map((group, i) => (
      <div key={group[0].label} className="flex flex-col items-center">
        {i > 0 && (
          <div className="flex h-[6px] w-[31px] flex-col justify-center">
            <div className="h-px bg-[#6a8ccb]" />
            <div className="h-px bg-white" />
          </div>
        )}
        {group.map((tool) => (
          <button key={tool.label} aria-label={tool.label} disabled className="flex h-[38px] w-full items-center justify-center">
            {tool.boxed ? (
              <span className="flex h-7 w-8 items-center justify-center rounded-sm border border-[#a3b0cf] bg-[#e3e8f2]">
                <Icon>{tool.icon}</Icon>
              </span>
            ) : (
              <Icon>{tool.icon}</Icon>
            )}
          </button>
        ))}
      </div>
    ))}
    <button
      aria-label="工具栏选项"
      className="mt-auto flex h-[11px] shrink-0 items-center justify-between bg-linear-to-r from-[#74a0ef] to-[#07338f] px-1"
    >
      <svg width="5" height="8" viewBox="0 0 5 8" aria-hidden="true">
        <path d="M0 0h4L2 2.500zM0 4.500h4L2 7z" fill="#000" />
      </svg>
      <svg width="8" height="7" viewBox="0 0 8 7" aria-hidden="true">
        <path d="M1 1h1v6H1zM4 1v6l4-3z" fill="#fff" />
        <path d="M0 0h1v6H0zM3 0v6l4-3z" fill="#000" />
      </svg>
    </button>
  </div>
);

const StatusBar = () => (
  <footer className="flex h-[21px] shrink-0 items-center bg-linear-to-b from-[#c6dafa] via-[#dce9fc] to-[#bdd4f8] pt-px pl-1 text-xs whitespace-nowrap text-black">
    <svg width="16" height="16" viewBox="0 0 32 32" fill="none" aria-hidden="true">
      <PrinterShape />
    </svg>
    <span className="ml-[5px] w-[141px]">打印机: Adobe PDF</span>
    <Separator className="h-[19px]" />
    <svg width="16" height="16" viewBox="0 0 32 32" fill="none" aria-hidden="true" className="ml-[2px]">
      <GridPage />
    </svg>
    <span className="ml-[5px]">纸张大小: A4</span>
    <span className="ml-2">项目宽度: 98.7毫米</span>
    <span className="ml-2">项目高度: 54.3毫米</span>
    <div className="ml-auto flex items-center">
      <Separator className="h-[19px]" />
      <svg width="16" height="16" viewBox="0 0 32 32" fill="none" aria-hidden="true" className="ml-[3px]">
        <path d="M20 20l10 9" stroke="#a87a20" strokeWidth="5" />
        <circle cx="13" cy="13" r="10.500" fill="url(#lens)" stroke="#6d93a8" strokeWidth="2" />
        <path d="M13 8v10M8 13h10" stroke="#3f6186" strokeWidth="3" />
      </svg>
      <button className="ml-1 flex w-[54px] items-center justify-between">
        242%
        <svg width="7" height="4" viewBox="0 0 7 4" aria-hidden="true">
          <path d="M0 0h7L3.500 4z" fill="#000" />
        </svg>
      </button>
      <svg width="12" height="12" viewBox="0 0 12 12" aria-hidden="true" className="mx-[6px] self-end">
        <path d="M8 1h2v2H8zM8 5h2v2H8zM8 9h2v2H8zM4 5h2v2H4zM4 9h2v2H4zM0 9h2v2H0z" fill="#a9b8d0" />
      </svg>
    </div>
  </footer>
);

export default function App() {
  return (
    <div className="flex h-screen min-h-[740px] flex-col overflow-hidden rounded-t-lg border border-[#2f3640] bg-[#a5c8dc] px-[6px] pb-[6px] font-['Noto_Sans','Noto_Sans_CJK_SC',sans-serif]">
      <Gradients />
      <div className="-mx-[6px] bg-[#d5e6f3] px-[6px]">
        <TitleBar />
      </div>
      <div className="flex min-h-0 flex-1 flex-col border border-[#4d626c] bg-linear-to-r from-[#9ebbf5] to-[#c3d8fa]">
        <MenuBar />
        <div className="flex flex-col gap-px pr-px pl-[3px]">
          <div className="flex gap-[3px]">
            <FileToolbar />
            <ObjectToolbar />
            <ViewToolbar />
          </div>
          <div className="flex gap-[3px]">
            <TextToolbar />
            <LineToolbar />
          </div>
        </div>
        <div className="flex min-h-0 flex-1">
          <SideTabs />
          <DataSourcePanel />
          <Workspace />
          <ArrangeToolbar />
        </div>
        <StatusBar />
      </div>
    </div>
  );
}
